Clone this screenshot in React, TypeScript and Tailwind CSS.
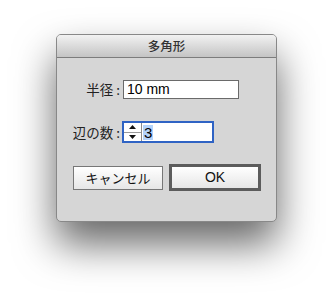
export default function App() {
  return (
    <div className="w-[333px] h-[300px] bg-white pt-[34px] pl-[56px] [font-family:'Liberation_Sans','Noto_Sans_CJK_JP',sans-serif]">
      <div className="w-[221px] h-[188px] rounded-[5px] border border-[#888] bg-[#d6d6d6] shadow-[0_22px_40px_rgba(0,0,0,0.6)] overflow-hidden flex flex-col">
        {/* Title bar */}
        <div className="h-[23px] shrink-0 border-b border-[#7c7c7c] bg-gradient-to-b from-[#f2f2f2] to-[#c4c4c4] flex items-center justify-center text-[12.5px] font-medium text-[#333] [font-family:'Noto_Sans_CJK_JP',sans-serif]">
          多角形
        </div>

        <div className="flex flex-col pt-[22px]">
          {/* Radius */}
          <div className="flex items-center h-[19px]">
            <span className="w-[63px] text-right text-[13.5px] text-[#222] [font-family:'Noto_Sans_CJK_JP',sans-serif]">
              半径 :
            </span>
            <div className="ml-[3px] w-[116px] h-[19px] bg-white border border-[#6a6a6a] flex items-center pl-[3px] text-[14px] text-black">
              10 mm
            </div>
          </div>

          {/* Sides */}
          <div className="flex items-center h-[22px] mt-[22px]">
            <span className="w-[63px] text-right text-[13.5px] text-[#222] [font-family:'Noto_Sans_CJK_JP',sans-serif]">
              辺の数 :
            </span>
            <div className="ml-[2px] w-[92px] h-[22px] border-2 border-[#2f63c4] bg-white flex">
              <div className="w-[18px] h-full border-r border-[#8a8a8a] flex flex-col bg-white">
                <div className="flex-1 flex items-center justify-center border-b border-[#9a9a9a]">
                  <svg width="7" height="4" viewBox="0 0 7 4">
                    <path d="M0 4 L3.5 0 L7 4 Z" fill="#111" />
                  </svg>
                </div>
                <div className="flex-1 flex items-center justify-center">
                  <svg width="7" height="4" viewBox="0 0 7 4">
                    <path d="M0 0 L3.5 4 L7 0 Z" fill="#111" />
                  </svg>
                </div>
              </div>
              <div className="flex items-center pl-[1px]">
                <span className="bg-[#b4d3fb] px-[1px] leading-[15px] text-[15px] text-black">3</span>
              </div>
            </div>
          </div>

          {/* Buttons */}
          <div className="flex items-center mt-[21px] pl-[16px] gap-[6px]">
            <button className="w-[90px] h-[24px] border border-[#777] bg-gradient-to-b from-white to-[#e6e6e6] text-[13px] text-[#111] [font-family:'Noto_Sans_CJK_JP',sans-serif]">
              キャンセル
            </button>
            <button className="w-[92px] h-[27px] border-[3px] border-[#5c5c5c] bg-gradient-to-b from-white to-[#e6e6e6] text-[14px] text-[#111]">
              OK
            </button>
          </div>
        </div>
      </div>
    </div>
  );
}
